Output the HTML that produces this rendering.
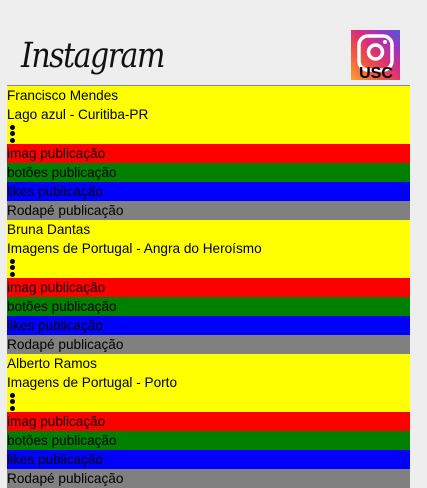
<!DOCTYPE html>
<html><head><meta charset="utf-8"><style>
*{margin:0;padding:0;box-sizing:border-box}
html,body{width:427px;height:476px;overflow:hidden;background:#eeeeee;font-family:"Liberation Sans",sans-serif;font-size:13.6px;color:#000}
.wrap{position:absolute;left:7px;top:0;width:403px}
header{height:86px;border-bottom:1px solid #888;position:relative}
.logo{position:absolute;left:14px;top:36px;font-family:"DejaVu Serif",serif;font-style:italic;font-size:30px;letter-spacing:-1.5px;color:#111;transform:scaleY(1.15);transform-origin:top left}
.icon{position:absolute;left:344px;top:30px;width:49px;height:50px;background:linear-gradient(45deg,#f9a23a 0%,#f0593b 30%,#d92e7b 55%,#9a35c2 80%,#4f5bd5 100%)}
.y{background:#ff0;height:58px}
.l{height:19px;line-height:19px;white-space:nowrap}
.dots{position:relative;height:20px}
.dots i{position:absolute;left:3px;width:5px;height:5px;border-radius:50%;background:#000}
.r{background:#f00}.g{background:#008000}.b{background:#00f}.gr{background:#808080}
</style></head><body>
<div class="wrap">
<header>
<div class="logo">Instagram</div>
<div class="icon"><svg width="49" height="50" viewBox="0 0 49 50"><rect x="8" y="6" width="33" height="34" rx="9" fill="none" stroke="#fff" stroke-width="3.5"/><circle cx="24.5" cy="22" r="7" fill="none" stroke="#fff" stroke-width="3.5"/><circle cx="34" cy="12" r="2" fill="#fff"/><text x="25" y="48" text-anchor="middle" font-family="Liberation Sans" font-weight="bold" font-size="16" fill="#000">USC</text></svg></div>
</header>
<div class="y"><div class="l">Francisco Mendes</div><div class="l">Lago azul - Curitiba-PR</div><div class="dots"><i style="top:1px"></i><i style="top:7px"></i><i style="top:14px"></i></div></div>
<div class="l r">imag publicação</div><div class="l g">botões publicação</div><div class="l b">likes publicação</div><div class="l gr">Rodapé publicação</div>
<div class="y"><div class="l">Bruna Dantas</div><div class="l">Imagens de Portugal - Angra do Heroísmo</div><div class="dots"><i style="top:1px"></i><i style="top:7px"></i><i style="top:14px"></i></div></div>
<div class="l r">imag publicação</div><div class="l g">botões publicação</div><div class="l b">likes publicação</div><div class="l gr">Rodapé publicação</div>
<div class="y"><div class="l">Alberto Ramos</div><div class="l">Imagens de Portugal - Porto</div><div class="dots"><i style="top:1px"></i><i style="top:7px"></i><i style="top:14px"></i></div></div>
<div class="l r">imag publicação</div><div class="l g">botões publicação</div><div class="l b">likes publicação</div><div class="l gr">Rodapé publicação</div>
</div>
</body></html>
